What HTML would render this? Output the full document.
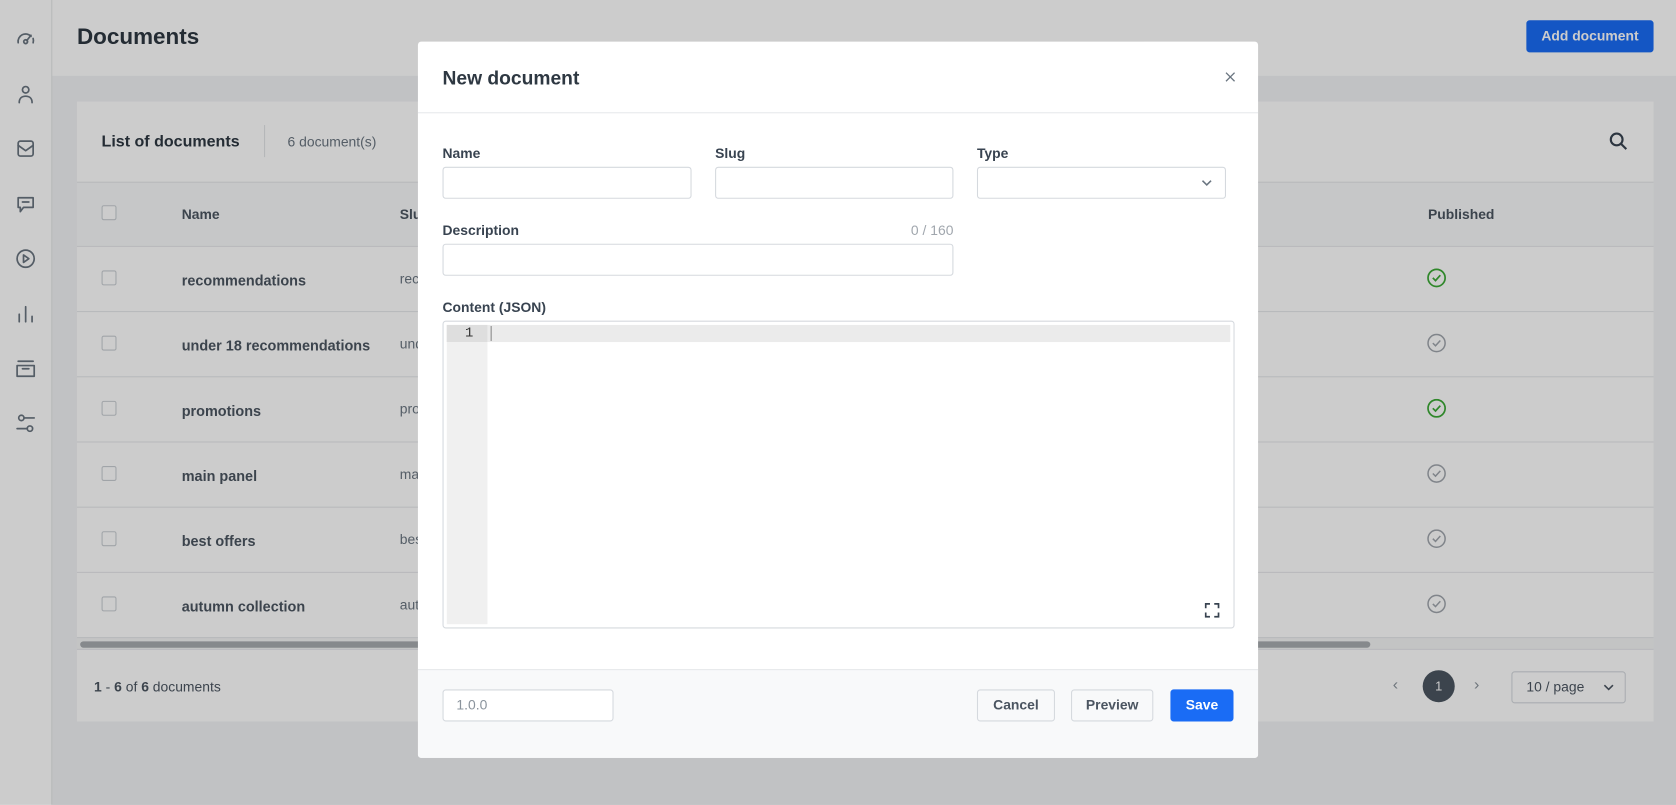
<!DOCTYPE html>
<html><head><meta charset="utf-8"><style>
*{box-sizing:border-box;margin:0;padding:0}
html,body{width:1676px;height:805px;overflow:hidden;background:#c8c9cb}
#w{position:absolute;left:0;top:0;width:1568px;height:753px;transform:scale(1.06888);transform-origin:0 0;font-family:"Liberation Sans",sans-serif;color:#384350;background:#f2f3f5}
.a{position:absolute}
.side{left:0;top:0;width:49px;height:753px;background:#fff;border-right:1px solid #e3e5e8}
.side svg{position:absolute;left:14px;width:20px;height:20px;fill:none;stroke:#6a7580;stroke-width:1.6;stroke-linecap:round;stroke-linejoin:round}
.hdr{left:49px;top:0;right:0;height:71px;background:#fff}
.card{left:72px;top:95px;width:1475px;height:580px;background:#fff}
.cb{position:absolute;left:23px;width:14px;height:14px;border:1px solid #c9ced3;border-radius:2px;background:#fff}
.row{position:absolute;left:0;width:1475px;height:61px;border-top:1px solid #e6e8eb}
.row .n{position:absolute;left:98px;top:24px;font-size:13.5px;font-weight:bold;color:#4b5561}
.row .s{position:absolute;left:302px;top:22px;font-size:13px;color:#6a7580}
.row svg{position:absolute;left:1263px;top:20px}
.ov{left:0;top:0;width:1568px;height:753px;background:rgba(0,0,0,0.2)}
.m{left:391px;top:39px;width:786px;height:670px;background:#fff;border-radius:3px;overflow:hidden}
.lbl{position:absolute;font-size:13px;font-weight:bold;color:#384350}
.in{position:absolute;height:30px;border:1px solid #d5d9de;border-radius:3px;background:#fff}
.btn{position:absolute;top:606px;height:30px;border:1px solid #d5d9de;border-radius:3px;background:#f8f9fa;font-size:13px;font-weight:bold;color:#4b5561;text-align:center;line-height:28px}
</style></head><body><div id="w">
<div class="a side">
<svg style="top:26px" viewBox="0 0 20 20"><path d="M3 14a7 7 0 0 1 12-6M17 10a7 7 0 0 1 0 4"/><circle cx="10" cy="13" r="1.8"/><path d="M11 12l4-5"/></svg>
<svg style="top:78px" viewBox="0 0 20 20"><circle cx="10" cy="6" r="3"/><path d="M4 18c0-4 2.5-6 6-6s6 2 6 6"/></svg>
<svg style="top:129px" viewBox="0 0 20 20"><rect x="3" y="3" width="14" height="14" rx="2"/><path d="M3 7l7 5 7-5"/></svg>
<svg style="top:181px" viewBox="0 0 20 20"><path d="M3 4h14v9H8l-3 4v-4H3z"/><path d="M7 8h6"/></svg>
<svg style="top:232px" viewBox="0 0 20 20"><circle cx="10" cy="10" r="8"/><path d="M8 6.5l5 3.5-5 3.5z"/></svg>
<svg style="top:284px" viewBox="0 0 20 20"><path d="M4 10v7M10 3v14M16 12v5"/></svg>
<svg style="top:335px" viewBox="0 0 20 20"><path d="M3 3h14M2 7h16v10H2zM7 10h6"/></svg>
<svg style="top:386px" viewBox="0 0 20 20"><circle cx="6" cy="5" r="2.5"/><path d="M8.5 5H18M2 15h9.5"/><circle cx="14" cy="15" r="2.5"/></svg>
</div>
<div class="a hdr"><div class="a" style="left:23px;top:23px;font-size:21px;font-weight:bold;color:#2e3842">Documents</div>
<div class="a" style="left:1379px;top:19px;width:119px;height:30px;background:#1a6cf5;border-radius:3px;color:#fff;font-size:13px;font-weight:bold;text-align:center;line-height:30px">Add document</div></div>
<div class="a card">
<div class="a" style="left:23px;top:29px;font-size:15px;font-weight:bold;color:#2e3842">List of documents</div>
<div class="a" style="left:175px;top:22px;width:1px;height:30px;background:#e3e5e8"></div>
<div class="a" style="left:197px;top:30px;font-size:13px;color:#6a7580">6 document(s)</div>
<svg class="a" style="left:1433px;top:28px" width="18" height="18" viewBox="0 0 18 18" fill="none" stroke="#384350" stroke-width="2"><circle cx="7.5" cy="7.5" r="5.5"/><path d="M11.5 11.5l5 5"/></svg>
<div class="a" style="left:0;top:75px;width:1475px;height:60px;background:#f8f9fa;border-top:1px solid #e6e8eb"><div class="cb" style="top:21px"></div><div class="a" style="left:98px;top:22px;font-size:13px;font-weight:bold;color:#4b5561">Name</div><div class="a" style="left:302px;top:22px;font-size:13px;font-weight:bold;color:#4b5561">Slug</div><div class="a" style="left:1264px;top:22px;font-size:13px;font-weight:bold;color:#4b5561">Published</div></div>
<div class="row" style="top:135px"><div class="cb" style="top:22px"></div><div class="n">recommendations</div><div class="s">recommendations</div><svg width="18" height="18" viewBox="0 0 18 18" fill="none" stroke="#3ba935" stroke-width="1.6"><circle cx="9" cy="9" r="8"/><path d="M5.5 9l2.5 2.5 4.5-5"/></svg></div>
<div class="row" style="top:196px"><div class="cb" style="top:22px"></div><div class="n">under 18 recommendations</div><div class="s">under-18</div><svg width="18" height="18" viewBox="0 0 18 18" fill="none" stroke="#a0a6ad" stroke-width="1.4"><circle cx="9" cy="9" r="8"/><path d="M5.5 9l2.5 2.5 4.5-5"/></svg></div>
<div class="row" style="top:257px"><div class="cb" style="top:22px"></div><div class="n">promotions</div><div class="s">promotions</div><svg width="18" height="18" viewBox="0 0 18 18" fill="none" stroke="#3ba935" stroke-width="1.6"><circle cx="9" cy="9" r="8"/><path d="M5.5 9l2.5 2.5 4.5-5"/></svg></div>
<div class="row" style="top:318px"><div class="cb" style="top:22px"></div><div class="n">main panel</div><div class="s">main-panel</div><svg width="18" height="18" viewBox="0 0 18 18" fill="none" stroke="#a0a6ad" stroke-width="1.4"><circle cx="9" cy="9" r="8"/><path d="M5.5 9l2.5 2.5 4.5-5"/></svg></div>
<div class="row" style="top:379px"><div class="cb" style="top:22px"></div><div class="n">best offers</div><div class="s">best-offers</div><svg width="18" height="18" viewBox="0 0 18 18" fill="none" stroke="#a0a6ad" stroke-width="1.4"><circle cx="9" cy="9" r="8"/><path d="M5.5 9l2.5 2.5 4.5-5"/></svg></div>
<div class="row" style="top:440px"><div class="cb" style="top:22px"></div><div class="n">autumn collection</div><div class="s">autumn</div><svg width="18" height="18" viewBox="0 0 18 18" fill="none" stroke="#a0a6ad" stroke-width="1.4"><circle cx="9" cy="9" r="8"/><path d="M5.5 9l2.5 2.5 4.5-5"/></svg></div>
<div class="a" style="left:0;top:501px;width:1475px;height:12px;background:#f4f5f6;border-top:1px solid #e6e8eb;border-bottom:1px solid #e6e8eb"><div class="a" style="left:3px;top:3px;width:1207px;height:6px;border-radius:3px;background:#a8acb0"></div></div>
<div class="a" style="left:16px;top:540px;font-size:13px;color:#4b5561"><b>1</b> - <b>6</b> of <b>6</b> documents</div>
<div class="a" style="left:1231px;top:537px;font-size:15px;color:#8a939c">‹</div>
<div class="a" style="left:1259px;top:532px;width:30px;height:30px;border-radius:15px;background:#4b5561;color:#fff;font-size:12px;text-align:center;line-height:30px">1</div>
<div class="a" style="left:1307px;top:537px;font-size:15px;color:#8a939c">›</div>
<div class="a" style="left:1342px;top:533px;width:107px;height:30px;border:1px solid #d5d9de;border-radius:3px;font-size:13px;color:#4b5561;line-height:28px;padding-left:13px">10 / page<svg class="a" style="right:10px;top:11px" width="10" height="7" viewBox="0 0 10 7" fill="none" stroke="#4b5561" stroke-width="1.5"><path d="M1 1l4 4 4-4"/></svg></div>
</div>
<div class="a ov"></div>
<div class="a m">
<div class="a" style="left:23px;top:24px;font-size:18px;font-weight:bold;color:#2e3842">New document</div>
<svg class="a" style="left:755px;top:28px" width="10" height="10" viewBox="0 0 10 10" stroke="#6a7580" stroke-width="1.2"><path d="M1 1l8 8M9 1l-8 8"/></svg>
<div class="a" style="left:0;top:66px;width:786px;height:1px;background:#e6e8eb"></div>
<div class="lbl" style="left:23px;top:97px">Name</div><div class="lbl" style="left:278px;top:97px">Slug</div><div class="lbl" style="left:523px;top:97px">Type</div>
<div class="in" style="left:23px;top:117px;width:233px"></div><div class="in" style="left:278px;top:117px;width:223px"></div>
<div class="in" style="left:523px;top:117px;width:233px"><svg class="a" style="right:12px;top:11px" width="10" height="7" viewBox="0 0 10 7" fill="none" stroke="#6a7580" stroke-width="1.5"><path d="M1 1l4 4 4-4"/></svg></div>
<div class="lbl" style="left:23px;top:169px">Description</div><div class="a" style="left:401px;width:100px;text-align:right;top:169px;font-size:13px;color:#a0a6ad">0 / 160</div>
<div class="in" style="left:23px;top:189px;width:478px"></div>
<div class="lbl" style="left:23px;top:241px">Content (JSON)</div>
<div class="in" style="left:23px;top:261px;width:741px;height:288px">
<div class="a" style="left:3px;top:3px;width:38px;height:280px;background:#f0f0f0"></div>
<div class="a" style="left:3px;top:3px;width:733px;height:16px;background:#ebebeb"></div>
<div class="a" style="left:3px;top:3px;width:38px;height:16px;background:#dedede"></div>
<div class="a" style="left:20px;top:3px;font-family:'Liberation Mono',monospace;font-size:13px;color:#333">1</div>
<div class="a" style="left:44px;top:4px;width:1px;height:14px;background:#888"></div>
<svg class="a" style="left:712px;top:263px" width="14" height="14" viewBox="0 0 14 14" fill="none" stroke="#384350" stroke-width="1.6"><path d="M1 5V1h4M9 1h4v4M13 9v4H9M5 13H1V9"/></svg>
</div>
<div class="a" style="left:0;top:587px;width:786px;height:83px;background:#f8f9fa;border-top:1px solid #e6e8eb"></div>
<div class="in" style="left:23px;top:606px;width:160px;font-size:13px;color:#8a939c;line-height:28px;padding-left:12px">1.0.0</div>
<div class="btn" style="left:523px;width:73px">Cancel</div>
<div class="btn" style="left:611px;width:77px">Preview</div>
<div class="btn" style="left:704px;width:59px;background:#1a6cf5;border-color:#1a6cf5;color:#fff">Save</div>
</div>
</div></body></html>
